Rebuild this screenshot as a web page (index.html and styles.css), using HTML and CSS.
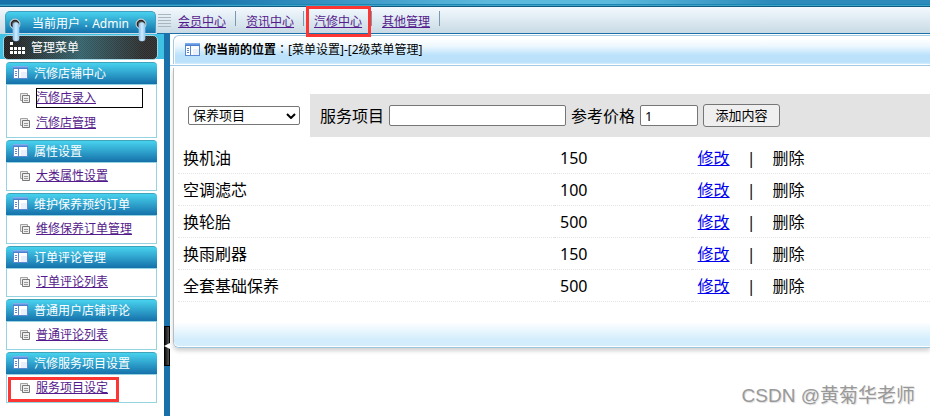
FILE: index.html
```html
<!DOCTYPE html>
<html lang="zh-CN">
<head>
<meta charset="utf-8">
<meta name="viewport" content="width=device-width, initial-scale=1">
<title>2级菜单管理</title>
<link rel="stylesheet" href="styles.css">
</head>
<body>
<svg class="defs" aria-hidden="true">
  <defs>
    <linearGradient id="bar" x1="0" y1="0" x2="0" y2="1"><stop offset="0" stop-color="#8db9f3"/><stop offset="1" stop-color="#3d74cb"/></linearGradient>
    <linearGradient id="clip" x1="0" y1="0" x2="1" y2="0"><stop offset="0" stop-color="#86bdea"/><stop offset=".5" stop-color="#d3ecff"/><stop offset="1" stop-color="#8cc3ef"/></linearGradient>
    <symbol id="panel" viewBox="0 0 15 13">
      <path fill="#fff" d="M0 1h15v12H0z"/>
      <path fill="#e9f0fb" d="M8 6h6v6H8z"/>
      <path fill="url(#bar)" d="M0 0h15v3H0z"/>
      <path fill="#5b8ad2" d="M0 3h1v9H0zM14 3h1v9h-1zM0 12h15v1H0zM5 3h1v9H5zM2 5h2v1H2zM2 7h2v1H2zM2 9h2v1H2z"/>
    </symbol>
    <symbol id="pages" viewBox="0 0 10 10">
      <path fill="#ececec" stroke="#a2a2a2" d="M.5.5h7v7h-7z"/>
      <path fill="#eee" stroke="#777" d="M2.500 2.500h7v7h-7z"/>
      <path fill="#999" d="M4 5h4v1H4zM4 7h4v1H4z"/>
    </symbol>
    <symbol id="ring" viewBox="0 0 12 24">
      <circle cx="6" cy="6" r="5" fill="#eee" stroke="#bfc7ca"/>
      <circle cx="6" cy="6" r="3.600" fill="#666" stroke="#252525" stroke-width="1.500"/>
      <path fill="url(#clip)" stroke="#a9d3f3" stroke-width=".6" d="M4 7.500a3 3 0 0 1 6 0V21q0 2-3 2t-3-2z"/>
    </symbol>
  </defs>
</svg>

<div class="strip"></div>
<header class="top">
  <div class="user-area">
    <div class="user">
      <svg class="ring ring-left"><use href="#ring"/></svg>
      当前用户<span class="colon" lang="zh-TW">：</span>Admin
      <svg class="ring ring-right"><use href="#ring"/></svg>
    </div>
  </div>
  <nav class="nav">
    <span class="grip"></span>
    <a href="#">会员中心</a>
    <a href="#">资讯中心</a>
    <a href="#" class="marked">汽修中心</a>
    <a href="#">其他管理</a>
  </nav>
</header>

<div class="body">
  <aside class="side">
    <div class="title-area">
      <div class="title">
        <svg class="dots" viewBox="0 0 16 12"><path fill="#fff" d="M0 0h3v3H0zM0 5h3v3H0zM4 5h3v3H4zM8 5h3v3H8zM12 5h3v3h-3zM0 9h3v3H0zM4 9h3v3H4zM8 9h3v3H8zM12 9h3v3h-3z"/></svg>
        管理菜单
      </div>
    </div>
    <div class="menu">
      <section>
        <h2><svg class="panel"><use href="#panel"/></svg>汽修店铺中心</h2>
        <ul>
          <li><svg class="pages"><use href="#pages"/></svg><a href="#" class="focused">汽修店录入</a></li>
          <li><svg class="pages"><use href="#pages"/></svg><a href="#">汽修店管理</a></li>
        </ul>
      </section>
      <section>
        <h2><svg class="panel"><use href="#panel"/></svg>属性设置</h2>
        <ul><li><svg class="pages"><use href="#pages"/></svg><a href="#">大类属性设置</a></li></ul>
      </section>
      <section>
        <h2><svg class="panel"><use href="#panel"/></svg>维护保养预约订单</h2>
        <ul><li><svg class="pages"><use href="#pages"/></svg><a href="#">维修保养订单管理</a></li></ul>
      </section>
      <section>
        <h2><svg class="panel"><use href="#panel"/></svg>订单评论管理</h2>
        <ul><li><svg class="pages"><use href="#pages"/></svg><a href="#">订单评论列表</a></li></ul>
      </section>
      <section>
        <h2><svg class="panel"><use href="#panel"/></svg>普通用户店铺评论</h2>
        <ul><li><svg class="pages"><use href="#pages"/></svg><a href="#">普通评论列表</a></li></ul>
      </section>
      <section>
        <h2><svg class="panel"><use href="#panel"/></svg>汽修服务项目设置</h2>
        <ul class="marked-item"><li><svg class="pages"><use href="#pages"/></svg><a href="#">服务项目设定</a></li></ul>
      </section>
    </div>
  </aside>

  <div class="splitter">
    <button class="handle" type="button" aria-label="收起菜单"><svg viewBox="0 0 6 6"><path fill="#fff" d="M0 3l6-3v6z"/></svg></button>
  </div>

  <main class="main">
    <div class="crumb-wrap">
      <div class="crumb"><svg class="panel"><use href="#panel"/></svg><span><b>你当前的位置</b><span class="colon" lang="zh-TW">：</span>[菜单设置]-[2级菜单管理]</span></div>
    </div>
    <div class="content">
      <form class="form">
        <div class="pick">
          <select aria-label="项目分类"><option>保养项目</option></select>
          <svg class="chevron" viewBox="0 0 10 6"><path fill="none" stroke="#000" stroke-width="2" d="M1 1l4 4 4-4"/></svg>
        </div>
        <div class="fields">
          <label for="service">服务项目</label>
          <input id="service" class="service" type="text">
          <label for="price">参考价格</label>
          <input id="price" class="price" type="text" value="1">
          <button class="add" type="button">添加内容</button>
        </div>
      </form>
      <table class="list">
        <colgroup><col class="name"><col class="cost"><col></colgroup>
        <tbody>
          <tr><td>换机油</td><td>150</td><td><div class="actions"><a href="#">修改</a><span>|</span><span>删除</span></div></td></tr>
          <tr><td>空调滤芯</td><td>100</td><td><div class="actions"><a href="#">修改</a><span>|</span><span>删除</span></div></td></tr>
          <tr><td>换轮胎</td><td>500</td><td><div class="actions"><a href="#">修改</a><span>|</span><span>删除</span></div></td></tr>
          <tr><td>换雨刷器</td><td>150</td><td><div class="actions"><a href="#">修改</a><span>|</span><span>删除</span></div></td></tr>
          <tr><td>全套基础保养</td><td>500</td><td><div class="actions"><a href="#">修改</a><span>|</span><span>删除</span></div></td></tr>
        </tbody>
      </table>
      <div class="foot"></div>
    </div>
  </main>
</div>
<div class="watermark">CSDN @黄菊华老师</div>
</body>
</html>
```
FILE: styles.css
```css
* { box-sizing: border-box; }

body {
  margin: 0;
  min-height: 100vh;
  display: flex;
  flex-direction: column;
  overflow: hidden;
  background: #fff;
  color: #000;
  font: 12px/20px "Noto Sans", "Noto Sans CJK SC", sans-serif;
}

svg { display: block; flex: none; }
.defs { position: absolute; width: 0; height: 0; }
.colon { font-family: "Noto Sans CJK TC", sans-serif; line-height: 1; }

/* Top bar */
.strip {
  height: 7px;
  background: linear-gradient(90deg, #1670aa 20%, #5cb9dc 52%, #5cb9dc 66%, #2d8bbb 83%);
  border-bottom: 1px solid #0e5c86;
  box-shadow: inset 0 -1px #3da4c6, inset 0 -2px #1c86b4;
}

.top {
  display: flex;
  height: 27px;
  background: linear-gradient(#f3f9fe, #c7d9e4);
}

.user-area {
  width: 157px;
  padding: 4px 1px 0 5px;
}

.user {
  position: relative;
  height: 22px;
  border: 1px solid #3f9fbd;
  border-bottom: 0;
  border-radius: 5px 5px 0 0;
  background: linear-gradient(#48d2ee, #1571aa);
  color: #fff;
  line-height: 23px;
  text-align: center;
}

.ring {
  position: absolute;
  top: 6px;
  width: 12px;
  height: 24px;
  z-index: 1;
}
.ring-left { left: 3px; }
.ring-right { right: 8px; }

.nav {
  flex: 1;
  display: flex;
  align-items: center;
  border-bottom: 1px solid #1a70a8;
}

.grip {
  width: 13px;
  height: 13px;
  margin: 0 7px 0 1px;
  background: repeating-linear-gradient(#a9b6c0 0 1px, transparent 1px 3px);
}

.nav a {
  position: relative;
  margin-right: 20px;
  padding-top: 4px;
}

.nav a::after {
  content: "";
  position: absolute;
  right: -10px;
  top: 3px;
  width: 1px;
  height: 15px;
  background: #7a99ad;
}

.nav .marked::before {
  content: "";
  position: absolute;
  inset: -2px -9px -5px -8px;
  border: 3px solid #fc3733;
  z-index: 2;
}

a {
  color: #551a8b;
  text-decoration: underline;
}

/* Sidebar */
.body { flex: 1; display: flex; }
.side { width: 164px; }

.title-area {
  padding: 1px 6px 0 3px;
  height: 25px;
  background: #3fc1e3;
}

.title {
  display: flex;
  align-items: center;
  gap: 5px;
  height: 25px;
  padding-left: 6px;
  border: 1px solid #a3d6e4;
  border-radius: 5px;
  background:
    repeating-conic-gradient(#ffffff14 0 25%, transparent 0 50%) 0 0 / 2px 2px,
    linear-gradient(90deg, #222 5%, #33616a 50%, #2b2b2b 92%);
  color: #fff;
}
.dots { width: 16px; height: 12px; }

.menu {
  display: flex;
  flex-direction: column;
  gap: 2px;
  padding: 3px 7px 0 6px;
}

h2 {
  display: flex;
  align-items: center;
  gap: 6px;
  height: 22px;
  margin: 0;
  padding-left: 7px;
  border-top: 1px solid #3fa4b9;
  border-radius: 4px 4px 0 0;
  background: linear-gradient(#48d2ee, #1571aa);
  color: #fff;
  font-size: 12px;
  font-weight: 400;
}
.panel { width: 15px; height: 13px; }
h2 .panel { margin-bottom: 2px; }

ul {
  position: relative;
  margin: 0;
  padding: 0 0 2px 13px;
  list-style: none;
  border: 1px solid #94d3df;
}

li {
  display: flex;
  align-items: center;
  gap: 6px;
  height: 25px;
}
.pages { width: 10px; height: 10px; }

.focused {
  width: 107px;
  outline: 1px solid #000;
  outline-offset: -1px;
}

.marked-item::after {
  content: "";
  position: absolute;
  inset: 2px 37px 0 1px;
  border: 3px solid #fc3733;
}

/* Splitter */
.splitter {
  position: relative;
  width: 6px;
  background: #1a70a8;
}

.handle {
  position: absolute;
  top: 292px;
  width: 6px;
  height: 40px;
  padding: 0;
  border: 1px solid #000;
  background: linear-gradient(90deg, #111, #555);
}
.handle svg { width: 6px; height: 6px; margin-left: -1px; }

/* Main panel */
.main { flex: 1; min-width: 0; }

.crumb-wrap {
  padding: 1px 0 1px 3px;
  border-bottom: 1px solid #a2cbe3;
}

.crumb {
  display: flex;
  align-items: center;
  gap: 4px;
  height: 29px;
  padding: 0 0 2px 11px;
  border: 1px solid #a4cbe2;
  border-width: 1px 0 0 1px;
  border-radius: 6px 0 0 0;
  background: linear-gradient(#fff 10%, #eef8fe 35%, #bce2fb 68%, #bce2fb 94%, #d5edfc);
  box-shadow: inset 1px 1px #fff;
}
.crumb > span { padding-top: 2px; }

.content {
  margin: 2px 0 0 3px;
  padding: 26px 0 0 4px;
  border: 1px solid #b9bdc0;
  border-width: 0 0 1px 1px;
  border-bottom-color: #99c5de;
  border-radius: 0 0 0 6px;
  box-shadow: 0 3px 4px #0000002e;
  font-size: 16px;
}

.form { display: flex; height: 43px; }

.pick {
  position: relative;
  display: flex;
  align-items: center;
  padding: 0 10px;
}

select, input, button { font-family: inherit; font-size: 13px; }

select {
  width: 112px;
  height: 19px;
  padding: 0 4px;
  border: 1px solid #767676;
  border-radius: 2px;
  appearance: none;
  background: #fff;
  color: #000;
  line-height: 17px;
}

.chevron {
  position: absolute;
  right: 14px;
  width: 10px;
  height: 6px;
  pointer-events: none;
}

.fields {
  flex: 1;
  display: flex;
  align-items: center;
  gap: 5px;
  padding-left: 10px;
  background: #e3e3e3;
}

input {
  height: 21px;
  padding: 0 4px;
  border: 1px solid #767676;
  border-radius: 2px;
  background: #fff;
}
.service { width: 177px; }
.price { width: 58px; }

.add {
  width: 77px;
  height: 23px;
  padding: 0;
  border: 1px solid #767676;
  border-radius: 3px;
  background: #efefef;
  color: #000;
  line-height: 21px;
}

.list {
  width: 100%;
  margin-top: 5px;
  border-collapse: separate;
  border-spacing: 0;
  table-layout: fixed;
}

.list td {
  height: 32px;
  padding: 0 0 0 6px;
  border-bottom: 1px dotted #e4e4e4;
}
.list td:first-child { padding-left: 5px; }
.name { width: 50%; }
.cost { width: 18.3%; }

.actions { display: flex; gap: 17px; }
.actions a { color: #00e; }

.foot {
  height: 45px;
  margin-left: -4px;
  border-bottom: 1px solid #fff;
  border-radius: 0 0 0 5px;
  background: linear-gradient(#fff 45%, #d3edfc 85%);
}

.watermark {
  position: absolute;
  right: 15px;
  bottom: 6px;
  color: #999;
  font: 19px/28px "Liberation Sans", "Noto Sans CJK SC", sans-serif;
  text-shadow: 1px 1px 1px #ddd;
}
```
